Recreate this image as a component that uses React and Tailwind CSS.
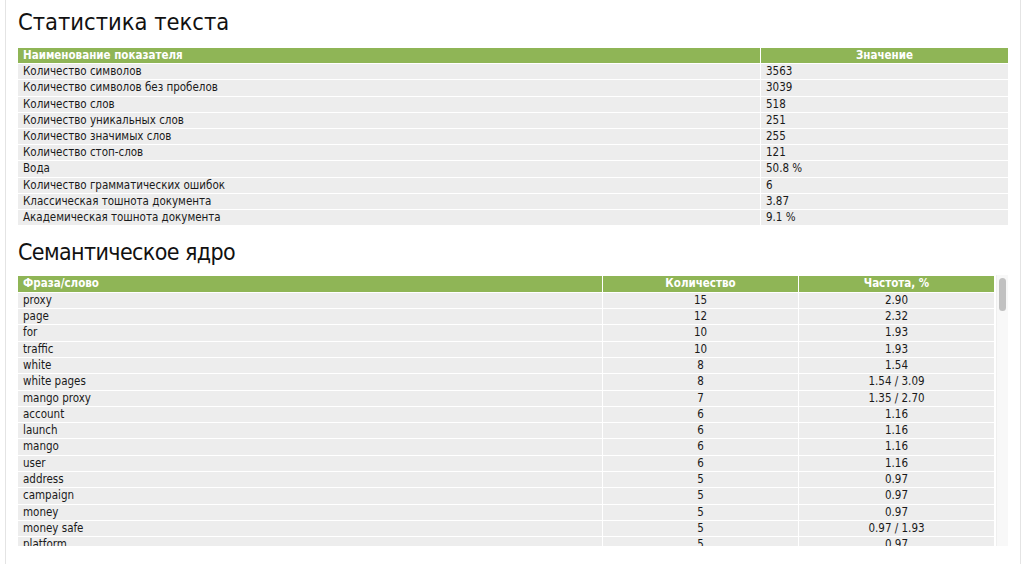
const stats = [
  ["Количество символов", "3563"],
  ["Количество символов без пробелов", "3039"],
  ["Количество слов", "518"],
  ["Количество уникальных слов", "251"],
  ["Количество значимых слов", "255"],
  ["Количество стоп-слов", "121"],
  ["Вода", "50.8 %"],
  ["Количество грамматических ошибок", "6"],
  ["Классическая тошнота документа", "3.87"],
  ["Академическая тошнота документа", "9.1 %"],
];

const core = [
  ["proxy", 15, "2.90"],
  ["page", 12, "2.32"],
  ["for", 10, "1.93"],
  ["traffic", 10, "1.93"],
  ["white", 8, "1.54"],
  ["white pages", 8, "1.54 / 3.09"],
  ["mango proxy", 7, "1.35 / 2.70"],
  ["account", 6, "1.16"],
  ["launch", 6, "1.16"],
  ["mango", 6, "1.16"],
  ["user", 6, "1.16"],
  ["address", 5, "0.97"],
  ["campaign", 5, "0.97"],
  ["money", 5, "0.97"],
  ["money safe", 5, "0.97 / 1.93"],
  ["platform", 5, "0.97"],
  ["safe", 5, "0.97"],
  ["the", 4, "0.77"],
  ["with", 4, "0.77"],
];

const th = "border border-white bg-[#8fb556] px-[5px] py-0 text-[11.5px] font-bold text-white";
const td = "border border-white bg-[#ededed] px-[5px] py-0 text-[11.5px] text-[#1a1a1a]";

export default function App() {
  return (
    <div className="min-h-screen bg-white font-['DejaVu_Sans_Condensed','DejaVu_Sans',sans-serif] font-stretch-condensed">
      <div className="ml-[5px] w-[1016px] border-x border-[#e4e4e4] px-3 pb-10 pt-[8px]">
        <h2 className="text-[23.5px] leading-[28px] text-[#111]">Статистика текста</h2>
        <table className="mt-[11px] -mx-px border-collapse" style={{ width: "calc(100% + 2px)" }}>
          <thead>
            <tr>
              <th className={th + " h-[15.2px] leading-[15.2px] text-left"}>Наименование показателя</th>
              <th className={th + " h-[15.2px] w-[248px] leading-[15.2px] text-center"}>Значение</th>
            </tr>
          </thead>
          <tbody>
            {stats.map(([name, value]) => (
              <tr key={name}>
                <td className={td + " h-[15.2px] leading-[15.2px]"}>{name}</td>
                <td className={td + " h-[15.2px] leading-[15.2px]"}>{value}</td>
              </tr>
            ))}
          </tbody>
        </table>

        <h2 className="mt-[12px] text-[23px] leading-[28px] tracking-[-0.6px] text-[#111]">Семантическое ядро</h2>
        <div className="mt-[9px] flex h-[271px] gap-[2px] overflow-hidden">
          <div className="flex-1 overflow-hidden">
            <table className="-mx-px border-collapse" style={{ width: "calc(100% + 2px)" }}>
              <thead>
                <tr>
                  <th className={th + " h-[15.3px] leading-[15.3px] text-left"}>Фраза/слово</th>
                  <th className={th + " h-[15.3px] w-[196px] leading-[15.3px] text-center"}>Количество</th>
                  <th className={th + " h-[15.3px] w-[196px] leading-[15.3px] text-center"}>Частота, %</th>
                </tr>
              </thead>
              <tbody>
                {core.map(([word, count, freq]) => (
                  <tr key={word}>
                    <td className={td + " h-[15.33px] leading-[15.33px]"}>{word}</td>
                    <td className={td + " h-[15.33px] leading-[15.33px] text-center"}>{count}</td>
                    <td className={td + " h-[15.33px] leading-[15.33px] text-center"}>{freq}</td>
                  </tr>
                ))}
              </tbody>
            </table>
          </div>
          <div className="flex w-[12px] flex-col items-center border-l border-[#efefef] bg-[#f8f8f8] pt-[3px]">
            <div className="h-[33px] w-[7px] rounded-full bg-[#c1c1c1]" />
          </div>
        </div>
      </div>
    </div>
  );
}
